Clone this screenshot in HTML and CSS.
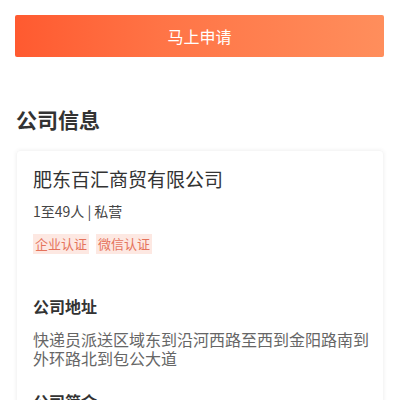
FILE: index.html
```html
<!DOCTYPE html>
<html>
<head>
<meta charset="utf-8">
<link rel="stylesheet" href="styles.css">
</head>
<body>
<div class="page">
  <button class="apply">马上申请</button>
  <h2 class="section-title">公司信息</h2>
  <div class="card">
    <div class="company-name">肥东百汇商贸有限公司</div>
    <div class="meta">1至49人 | 私营</div>
    <div class="tags">
      <span class="tag">企业认证</span>
      <span class="tag">微信认证</span>
    </div>
    <div class="sub-title">公司地址</div>
    <div class="address">快递员派送区域东到沿河西路至西到金阳路南到外环路北到包公大道</div>
    <div class="sub-title">公司简介</div>
  </div>
</div>
</body>
</html>
```
FILE: styles.css
```css
html, body {
  margin: 0;
  padding: 0;
  background: #fff;
}
body {
  font-family: "Noto Sans CJK SC", "Noto Sans", sans-serif;
  color: #333;
}
.page {
  padding: 15px 16px 0 15px;
}
.apply {
  display: block;
  width: 100%;
  height: 42px;
  border: none;
  border-radius: 2px;
  background: linear-gradient(90deg, #ff5a30 0%, #ff7446 40%, #ff8e5c 100%);
  color: #fff;
  font-family: inherit;
  font-size: 16px;
  padding: 0;
}
.section-title {
  margin: 48px 0 0 1px;
  font-size: 21px;
  font-weight: 700;
  line-height: 28px;
  color: #333;
}
.card {
  margin: 17px 0 0 1px;
  padding: 15px 12px 0 16px;
  border-radius: 4px;
  box-shadow: 0 0 4px rgba(0,0,0,0.06);
  border: 1px solid #f6f6f6;
}
.company-name {
  font-size: 19px;
  line-height: 26px;
  color: #333;
}
.meta {
  margin-top: 9px;
  font-size: 14px;
  line-height: 20px;
  color: #444;
}
.tags {
  margin-top: 13px;
  display: flex;
  gap: 7px;
}
.tag {
  background: #fde8e2;
  color: #e5735b;
  font-size: 13px;
  line-height: 20px;
  padding: 0 2px;
}
.sub-title {
  margin-top: 41px;
  font-size: 16px;
  font-weight: 700;
  line-height: 22px;
  color: #333;
}
.address {
  margin-top: 13px;
  font-size: 16px;
  line-height: 19px;
  color: #666;
}
.address + .sub-title {
  margin-top: 22px;
}
```
